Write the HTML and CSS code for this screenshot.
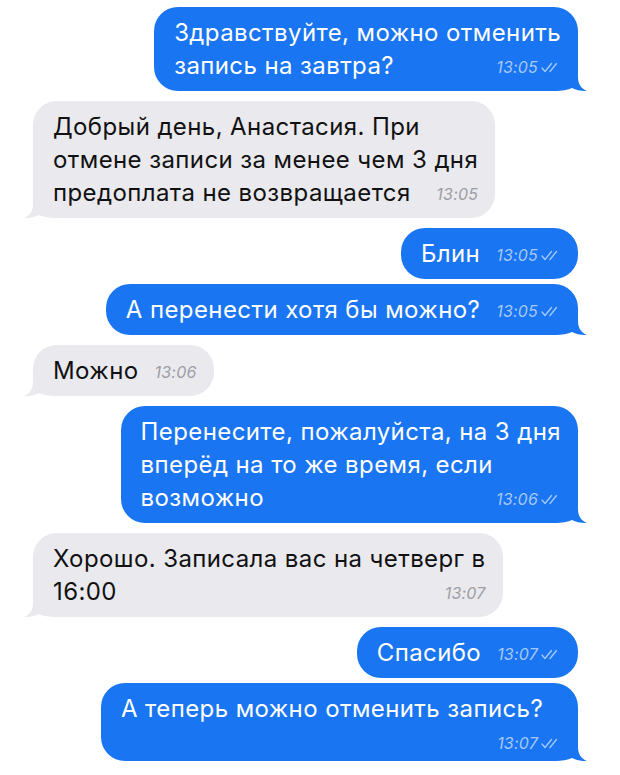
FILE: index.html
```html
<!DOCTYPE html>
<html lang="ru">
<head>
 <meta charset="UTF-8">
 <meta name="viewport" content="width=device-width, initial-scale=1.0">
 <title>Переписка</title>
 <link rel="stylesheet" href="styles.css">
</head>
<body>
 <div class="chat">

 <div class="msg out tail">Здравствуйте, можно отменить<br>запись на завтра?<span class="time">13:05<svg class="ticks" viewBox="0 0 20 11"><path d="M1 6 L4 9.5 L10.5 1.5 M9 9.5 L15.5 1.5"/></svg></span></div>

 <div class="msg in tail">Добрый день, Анастасия. При<br>отмене записи за менее чем 3 дня<br>предоплата не возвращается<span class="time">13:05</span></div>

 <div class="msg out">Блин<span class="time">13:05<svg class="ticks" viewBox="0 0 20 11"><path d="M1 6 L4 9.5 L10.5 1.5 M9 9.5 L15.5 1.5"/></svg></span></div>

 <div class="msg out tail">А перенести хотя бы можно?<span class="time">13:05<svg class="ticks" viewBox="0 0 20 11"><path d="M1 6 L4 9.5 L10.5 1.5 M9 9.5 L15.5 1.5"/></svg></span></div>

 <div class="msg in tail">Можно<span class="time">13:06</span></div>

 <div class="msg out tail">Перенесите, пожалуйста, на 3 дня<br>вперёд на то же время, если<br>возможно<span class="time">13:06<svg class="ticks" viewBox="0 0 20 11"><path d="M1 6 L4 9.5 L10.5 1.5 M9 9.5 L15.5 1.5"/></svg></span></div>

 <div class="msg in tail">Хорошо. Записала вас на четверг в<br>16:00<span class="time">13:07</span></div>

 <div class="msg out">Спасибо<span class="time">13:07<svg class="ticks" viewBox="0 0 20 11"><path d="M1 6 L4 9.5 L10.5 1.5 M9 9.5 L15.5 1.5"/></svg></span></div>

 <div class="msg out tail">А теперь можно отменить запись?<span class="time">13:07<svg class="ticks" viewBox="0 0 20 11"><path d="M1 6 L4 9.5 L10.5 1.5 M9 9.5 L15.5 1.5"/></svg></span></div>

 </div>
</body>
</html>
```

FILE: styles.css
```css
body {
    margin: 0;
    background: #fff;
    font-family: Inter, "Noto Sans", sans-serif;
}

.chat {
    display: flex;
    flex-direction: column;
    gap: 10px;
    padding: 7px 42px 0 33px;
}

.msg {
    position: relative;
    isolation: isolate;
    max-width: 440px;
    padding: 9px 17px 9px 20px;
    border-radius: 24px;
    font-size: 24px;
    line-height: 33px;
    letter-spacing: 0.4px;
}

.out {
    align-self: flex-end;
    background: #1a75f3;
    color: #fff;
}

.in {
    align-self: flex-start;
    background: #e9e9ee;
    color: #111;
}

.out + .out,
.in + .in {
    margin-top: -5px;
}

.time {
    float: right;
    margin: 9px 0 0 16px;
    font-size: 16px;
    line-height: 18px;
    font-style: italic;
    letter-spacing: 0.2px;
}

.out .time {
    color: #a6c9fb;
}

.in .time {
    color: #9d9da3;
}

.ticks {
    width: 20px;
    height: 11px;
    margin-left: 3px;
    fill: none;
    stroke: #a6c9fb;
    stroke-width: 1.3;
    stroke-linecap: round;
    stroke-linejoin: round;
}

/* хвостик у последнего сообщения в группе */
.tail::after {
    content: "";
    position: absolute;
    z-index: -1;
    bottom: 0;
    width: 34px;
    height: 24px;
    clip-path: path("M0 0 H24 V10 C24 18 28 22 33 24 C28 24.5 22 23 18 21 C14 23 8 24 0 24 Z");
}

.out.tail::after {
    right: -10px;
    background: #1a75f3;
}

.in.tail::after {
    left: -10px;
    background: #e9e9ee;
    transform: scaleX(-1);
}
```
